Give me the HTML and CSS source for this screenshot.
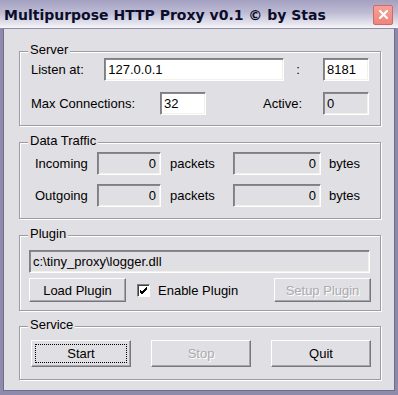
FILE: index.html
```html
<!DOCTYPE html>
<html lang="en">
<head>
    <meta charset="UTF-8">
    <title>Multipurpose HTTP Proxy</title>
    <link rel="stylesheet" href="styles.css">
</head>
<body>

    <div class="window">
        <div class="titlebar">
            <span class="title">Multipurpose HTTP Proxy v0.1 &copy; by Stas</span>
            <button class="close" type="button">
                <svg width="9" height="9" viewBox="0 0 9 9">
                    <path d="M1 1 L8 8 M8 1 L1 8" stroke="#fff" stroke-width="2.2" stroke-linecap="square"/>
                </svg>
            </button>
        </div>

        <div class="frame">
            <div class="client">

                <div class="group server">
                    <span class="caption">Server</span>
                    <div class="row">
                        <label class="lbl-listen" for="listen">Listen at:</label>
                        <input class="field w-addr" type="text" id="listen" value="127.0.0.1">
                        <span class="colon">:</span>
                        <input class="field w-small" type="text" id="port" value="8181">
                    </div>
                    <div class="row row-gap">
                        <label class="lbl-max" for="maxconn">Max Connections:</label>
                        <input class="field w-small" type="text" id="maxconn" value="32">
                        <span class="lbl-active">Active:</span>
                        <input class="field w-small readonly" type="text" value="0" readonly>
                    </div>
                </div>

                <div class="group traffic">
                    <span class="caption">Data Traffic</span>
                    <div class="row">
                        <span class="lbl-dir">Incoming</span>
                        <input class="field readonly num w-packets" type="text" value="0" readonly>
                        <span class="unit-packets">packets</span>
                        <input class="field readonly num w-bytes" type="text" value="0" readonly>
                        <span class="unit-bytes">bytes</span>
                    </div>
                    <div class="row row-gap-sm">
                        <span class="lbl-dir">Outgoing</span>
                        <input class="field readonly num w-packets" type="text" value="0" readonly>
                        <span class="unit-packets">packets</span>
                        <input class="field readonly num w-bytes" type="text" value="0" readonly>
                        <span class="unit-bytes">bytes</span>
                    </div>
                </div>

                <div class="group plugin">
                    <span class="caption">Plugin</span>
                    <input class="field readonly w-path" type="text" value="c:\tiny_proxy\logger.dll" readonly>
                    <div class="plugin-row">
                        <button class="btn btn-plugin" type="button">Load Plugin</button>
                        <label class="check">
                            <span class="box">
                                <svg width="9" height="9" viewBox="0 0 9 9">
                                    <path d="M1 4 L3 6 L8 1 M1 5 L3 7 L8 2 M1 6 L3 8 L8 3" stroke="#000" stroke-width="1" fill="none"/>
                                </svg>
                            </span>
                            Enable Plugin
                        </label>
                        <button class="btn btn-plugin disabled" type="button">Setup Plugin</button>
                    </div>
                </div>

                <div class="group service">
                    <span class="caption">Service</span>
                    <div class="buttons">
                        <button class="btn btn-service focused" type="button">Start</button>
                        <button class="btn btn-service disabled" type="button">Stop</button>
                        <button class="btn btn-service" type="button">Quit</button>
                    </div>
                </div>

            </div>
        </div>
    </div>

</body>
</html>
```

FILE: styles.css
```css
body {
    margin: 0;
    padding: 0;
    font-family: "Liberation Sans", Arial, sans-serif;
    font-size: 13px;
    color: #000;
    background-color: #e0dfe3;
}
.window {
    width: 398px;
    height: 395px;
    display: flex;
    flex-direction: column;
    background-color: #9e9cba;
}
.titlebar {
    height: 28px;
    display: flex;
    align-items: center;
    justify-content: space-between;
    padding: 0 5px 0 4px;
    box-sizing: border-box;
    background: linear-gradient(#a3a0c1, #bdbbd3 45%, #e6e5ee 85%, #f6f6f9);
}
.title {
    font-family: "DejaVu Sans", sans-serif;
    font-weight: bold;
    font-size: 14px;
    color: #0b0d2c;
    margin-top: 2px;
}
.close {
    width: 20px;
    height: 20px;
    margin-top: 1px;
    padding: 0;
    display: flex;
    align-items: center;
    justify-content: center;
    border: 1px solid #cf6b62;
    border-radius: 2px;
    background: linear-gradient(#f6a098, #ee857c);
}
.frame {
    flex: 1;
    display: flex;
    border-style: solid;
    border-color: #8d8aab;
    border-width: 0 3px 4px 3px;
}
.client {
    flex: 1;
    background-color: #e0dfe3;
    border: 1px solid #6f6d8d;
    border-top-color: #8f8da9;
    padding-top: 6px;
}

/* group boxes */
.group {
    position: relative;
    width: 362px;
    box-sizing: border-box;
    margin: 16px 0 0 15px;
    border: 1px solid #9d9ca3;
    box-shadow: 1px 1px 0 #fff, inset 1px 1px 0 #fff;
}
.caption {
    position: absolute;
    top: -10px;
    left: 8px;
    padding: 0 2px;
    line-height: 15px;
    background-color: #e0dfe3;
}
.server {
    margin-top: 16px;
    padding: 6px 11px 10px 11px;
}
.traffic {
    padding: 9px 0 11px 15px;
}
.plugin {
    padding: 14px 0 8px 9px;
}
.service {
    margin-top: 15px;
    padding: 13px 0 12px 11px;
}
.row {
    display: flex;
    align-items: center;
    height: 23px;
}
.row-gap {
    margin-top: 11px;
}
.row-gap-sm {
    margin-top: 9px;
}

/* sunken edit boxes */
.field {
    height: 23px;
    box-sizing: border-box;
    margin: 0;
    padding: 0 3px;
    font-family: "Liberation Sans", Arial, sans-serif;
    font-size: 13px;
    color: #000;
    background-color: #fff;
    border: 1px solid;
    border-color: #7f7e84 #fff #fff #7f7e84;
    box-shadow: inset 1px 1px 0 #8a8990, inset -1px -1px 0 #f3f2ea;
    outline: none;
}
.readonly {
    background-color: #e0dfe3;
}
.num {
    text-align: right;
    padding-right: 4px;
}
.lbl-listen {
    width: 74px;
}
.w-addr {
    width: 180px;
}
.colon {
    width: 39px;
    padding-left: 12px;
    box-sizing: border-box;
}
.w-small {
    width: 46px;
}
.lbl-max {
    width: 129px;
}
.lbl-active {
    width: 60px;
    margin-left: 57px;
}
.lbl-dir {
    width: 62px;
}
.w-packets {
    width: 64px;
}
.unit-packets {
    width: 72px;
    flex-shrink: 0;
    padding-left: 9px;
    box-sizing: border-box;
}
.w-bytes {
    width: 88px;
}
.unit-bytes {
    padding-left: 8px;
}
.w-path {
    width: 341px;
    display: block;
}

/* raised buttons */
.btn {
    margin: 0;
    padding: 0;
    font-family: "Liberation Sans", Arial, sans-serif;
    font-size: 13px;
    color: #000;
    background-color: #e0dfe3;
    border: 1px solid;
    border-color: #fff #77767c #77767c #fff;
    box-shadow: inset -1px -1px 0 #a7a6ac;
    cursor: pointer;
}
.btn.disabled {
    color: #acaab0;
    text-shadow: 1px 1px 0 #fff;
}
.btn.focused {
    outline: 1px dotted #000;
    outline-offset: -5px;
}
.plugin-row {
    display: flex;
    align-items: center;
    margin-top: 5px;
}
.btn-plugin {
    width: 97px;
    height: 24px;
}
.check {
    display: flex;
    align-items: center;
    gap: 8px;
    margin-left: 11px;
    width: 137px;
}
.box {
    width: 13px;
    height: 13px;
    box-sizing: border-box;
    display: flex;
    align-items: center;
    justify-content: center;
    background-color: #fff;
    border: 1px solid;
    border-color: #7f7e84 #fff #fff #7f7e84;
    box-shadow: inset 1px 1px 0 #404040;
}
.buttons {
    display: flex;
    gap: 20px;
}
.btn-service {
    width: 100px;
    height: 27px;
}
```
